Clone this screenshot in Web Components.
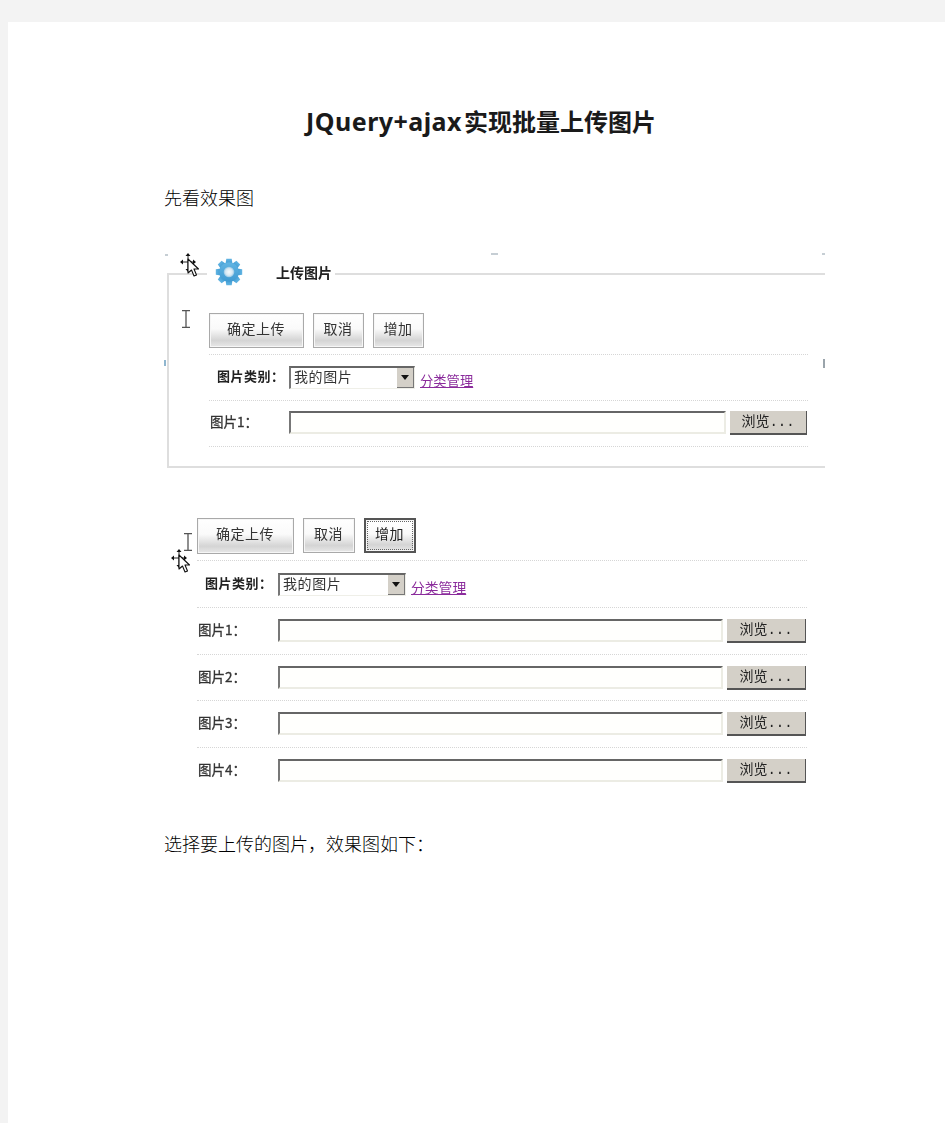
<!DOCTYPE html>
<html lang="zh-CN">
<head>
<meta charset="utf-8">
<title>JQuery+ajax实现批量上传图片</title>
<style>
  html, body { margin: 0; background: #f3f3f3; }
  body { padding: 22px 0 0 8px; font-family: "Noto Sans CJK TC", sans-serif; color: #111; }
</style>
</head>
<body>
<doc-page>
  <doc-title latin="JQuery+ajax">实现批量上传图片</doc-title>
  <doc-para style="margin-top:44px">先看效果图</doc-para>

  <shot-panel style="margin-top:39px">
    <form-row kind="bar"><push-button>确定上传</push-button><push-button small>取消</push-button><push-button small>增加</push-button></form-row>
    <form-row kind="select" label="图片类别：" w="80"></form-row>
    <form-row kind="file" label="图片1：" w="80"></form-row>
  </shot-panel>

  <shot-plain style="margin-top:48px">
    <form-row kind="bar2"><push-button wide>确定上传</push-button><push-button small>取消</push-button><push-button small focused>增加</push-button></form-row>
    <form-row kind="select2" label="图片类别：" w="81"></form-row>
    <form-row kind="file2" label="图片1：" w="81"></form-row>
    <form-row kind="file2" label="图片2：" w="81"></form-row>
    <form-row kind="file2" label="图片3：" w="81"></form-row>
    <form-row kind="file2" label="图片4：" w="81" last></form-row>
  </shot-plain>

  <doc-para style="margin-top:35px">选择要上传的图片，效果图如下：</doc-para>
</doc-page>

<script>
const MOVE_CURSOR = `
  <svg width="26" height="28" viewBox="0 0 26 28" style="display:block">
    <path d="M8 1v17M1 9h14" stroke="#222" stroke-width="1" fill="none"/>
    <path d="M8 0l-2.500 3h5zM8 19l-2.500-3h5zM0 9l3-2.500v5zM16 9l-3-2.500v5z" fill="#111"/>
    <path d="M8 6v14l3.500-3 2.500 6 2.500-1-2.500-6h4.500z" fill="#fff" stroke="#111" stroke-width="1.100" stroke-linejoin="round"/>
  </svg>`

const I_BEAM = `
  <svg width="10" height="18" viewBox="0 0 10 18" style="display:block">
    <path d="M1 .7h8M1 17.300h8M5 1v16" stroke="#555" stroke-width="1.300" fill="none"/>
  </svg>`

function gearSvg() {
  let teeth = ''
  for (let i = 0; i < 8; i++) {
    teeth += `<path d="M10.500 6 11.300 .8h5.400l.8 5.200z" transform="rotate(${i * 45} 14 14)"/>`
  }
  return `
  <svg width="28" height="28" viewBox="0 0 28 28" style="display:block">
    <defs>
      <radialGradient id="hole"><stop offset="0" stop-color="#f6fafc"/><stop offset=".65" stop-color="#d6e8f3"/><stop offset="1" stop-color="#8fc4e4"/></radialGradient>
      <linearGradient id="body" x2="0" y2="1"><stop offset="0" stop-color="#62b5e3"/><stop offset="1" stop-color="#3f9ad2"/></linearGradient>
    </defs>
    <g fill="url(#body)">${teeth}<circle cx="14" cy="14" r="9.800"/></g>
    <circle cx="14" cy="14" r="5.300" fill="url(#hole)"/>
  </svg>`
}

class DocPage extends HTMLElement {
  constructor() {
    super()
    this.attachShadow({ mode: 'open' }).innerHTML = `
      <style>
        :host { display: block; background: #fff; min-height: 1101px; padding: 81px 120px 0 156px; box-sizing: border-box; }
      </style>
      <slot></slot>`
  }
}

class DocTitle extends HTMLElement {
  constructor() {
    super()
    const latin = this.getAttribute('latin')
    this.attachShadow({ mode: 'open' }).innerHTML = `
      <style>
        :host { display: block; height: 36px; box-sizing: border-box; padding: 1px 27px 0 0; text-align: center; font: 700 24px/36px "Noto Sans", "Noto Sans CJK TC", sans-serif; color: #1a1a1a; }
        span { font-size: 25px; line-height: 0; letter-spacing: .45px; margin-right: 2px; }
      </style>
      <span>${latin}</span><slot></slot>`
  }
}

class DocPara extends HTMLElement {
  constructor() {
    super()
    this.attachShadow({ mode: 'open' }).innerHTML = `
      <style>
        :host { display: block; font: 300 18px/28px "Noto Sans CJK TC", sans-serif; color: #000; }
      </style>
      <slot></slot>`
  }
}

// first shot: a fieldset box with the gear legend, and selection handles around it
class ShotPanel extends HTMLElement {
  constructor() {
    super()
    this.attachShadow({ mode: 'open' }).innerHTML = `
      <style>
        :host { display: block; position: relative; padding-top: 23px; height: 220px; box-sizing: border-box; --small-w: 51px; }
        .box { margin-left: 3px; height: 195px; box-sizing: border-box; padding: 38px 17px 0 40px; border: 2px solid #dedede; border-right: 0; filter: blur(.6px); }
        .legend { position: absolute; left: 43px; top: 8px; width: 128px; height: 28px; display: flex; align-items: center; gap: 33px; padding-left: 8px; box-sizing: border-box; background: #fff; font: 700 14px "Noto Sans CJK TC", sans-serif; color: #222; filter: blur(.5px); }
        .move { position: absolute; left: 16px; top: 3px; }
        .beam { position: absolute; left: 17px; top: 60px; }
        .tick { position: absolute; background: #c6ced4; }
      </style>
      <div class="box"><slot></slot></div>
      <div class="legend">${gearSvg()}<span>上传图片</span></div>
      <div class="move">${MOVE_CURSOR}</div>
      <div class="beam">${I_BEAM}</div>
      <i class="tick" style="left:1px;top:4px;width:3px;height:2px"></i>
      <i class="tick" style="left:327px;top:3px;width:7px;height:2px"></i>
      <i class="tick" style="left:658px;top:3px;width:3px;height:2px"></i>
      <i class="tick" style="left:0;top:110px;width:2px;height:6px;background:#8fb6cf"></i>
      <i class="tick" style="left:659px;top:109px;width:2px;height:9px;background:#9aa4ab"></i>`
  }
}

// second shot: same form without the box, cursors to the left of it
class ShotPlain extends HTMLElement {
  constructor() {
    super()
    this.attachShadow({ mode: 'open' }).innerHTML = `
      <style>
        :host { display: block; position: relative; padding: 0 18px 0 33px; height: 276px; --select-w: 128px; --link-size: 13.800px; --link-top: 4px; }
        .rows { filter: blur(.6px); }
        .move { position: absolute; left: 7px; top: 31px; }
        .beam { position: absolute; left: 19px; top: 15px; }
      </style>
      <div class="rows"><slot></slot></div>
      <div class="beam">${I_BEAM}</div>
      <div class="move">${MOVE_CURSOR}</div>`
  }
}

class PushButton extends HTMLElement {
  constructor() {
    super()
    this.attachShadow({ mode: 'open' }).innerHTML = `
      <style>
        :host { display: flex; align-items: center; justify-content: center; width: 95px; height: 35px; box-sizing: border-box; padding: 0 1px 6px 0; border: 1px solid #a9a9a9; box-shadow: inset 0 0 0 1px #f6f6f6; background: linear-gradient(#fff 0, #fafafa 45%, #d4d4d4 80%, #e8e8e8 100%); font: 400 14px "Noto Sans CJK TC", sans-serif; letter-spacing: .5px; color: #333; }
        :host([wide]) { width: 97px; height: 36px; }
        :host([small]) { width: var(--small-w, 52px); }
        :host([focused]) { border: 2px solid #555; outline: 1px dotted #666; outline-offset: -4px; color: #222; }
      </style>
      <slot></slot>`
  }
}

class FakeSelect extends HTMLElement {
  constructor() {
    super()
    this.attachShadow({ mode: 'open' }).innerHTML = `
      <style>
        :host { display: flex; width: var(--select-w, 126px); height: 23px; box-sizing: border-box; border: 1px solid #efefe8; border-top: 2px solid #666; border-left: 2px solid #777; background: #fff; font: 400 14px/17px "Noto Sans CJK TC", sans-serif; letter-spacing: .6px; color: #333; }
        span { flex: 1; padding-left: 3px; }
        b { width: 17px; background: #d4d0c8; border-right: 1px solid #777; border-bottom: 1px solid #777; box-sizing: border-box; display: flex; align-items: center; justify-content: center; }
        b::after { content: ""; border: 4px solid transparent; border-top: 5px solid #111; border-bottom: 0; }
      </style>
      <span>我的图片</span><b></b>`
  }
}

class FileBox extends HTMLElement {
  constructor() {
    super()
    this.attachShadow({ mode: 'open' }).innerHTML = `
      <style>
        :host { display: flex; gap: 4px; margin-right: 1px; }
        .input { flex: 1; height: 23px; box-sizing: border-box; background: #fffffd; border: 2px solid #ecece4; border-top-color: #666; border-left-color: #777; }
        .browse { height: 24px; box-sizing: border-box; padding-bottom: 4px; background: #d4d0c8; border-right: 1px solid #555; border-bottom: 2px solid #555; display: flex; align-items: center; justify-content: center; font: 400 14px "Liberation Mono", "Noto Sans CJK TC", monospace; color: #222; width: var(--browse-w, 77px); }
      </style>
      <div class="input"></div><div class="browse">浏览...</div>`
  }
}

const ROW_KINDS = {
  bar: 'height:42px;gap:9px',
  bar2: 'height:43px;gap:9px',
  select: 'height:46px;padding-top:11px',
  select2: 'height:47px;padding-top:12px',
  file: 'height:46px;padding-top:10px',
  file2: 'height:46.670px;padding-top:11px'
}

class FormRow extends HTMLElement {
  constructor() {
    super()
    this.attachShadow({ mode: 'open' })
  }

  connectedCallback() {
    const kind = this.getAttribute('kind')
    const label = this.getAttribute('label')
    const labelWidth = this.getAttribute('w')
    const isSelect = kind.startsWith('select')
    const isFile = kind.startsWith('file')
    const browseWidth = kind === 'file2' ? '79px' : '77px'

    let body = '<slot></slot>'
    if (isSelect) {
      body = `
        <label class="strong">${label}</label>
        <fake-select></fake-select>
        <a>分类管理</a>`
    } else if (isFile) {
      body = `
        <label>${label}</label>
        <file-box style="flex:1;--browse-w:${browseWidth}"></file-box>`
    }

    this.shadowRoot.innerHTML = `
      <style>
        :host { display: flex; align-items: flex-start; box-sizing: border-box; border-bottom: 1px dotted #d6d6d6; ${ROW_KINDS[kind]} }
        :host([last]) { border-bottom-color: transparent; }
        label { flex: 0 0 ${labelWidth}px; box-sizing: border-box; padding-left: 1px; font: 400 13.500px/20px "Noto Sans CJK TC", sans-serif; -webkit-text-stroke: .3px #333; color: #333; white-space: nowrap; }
        label.strong { font-weight: 700; font-size: 13px; letter-spacing: .5px; -webkit-text-stroke: 0; color: #222; padding-left: 8px; }
        a { margin: var(--link-top, 5px) 0 0 5px; font: 400 var(--link-size, 13.300px)/20px "Noto Sans CJK TC", sans-serif; color: #8b2c9c; text-decoration: underline; }
      </style>
      ${body}`
  }
}

window.customElements.define('doc-page', DocPage)
window.customElements.define('doc-title', DocTitle)
window.customElements.define('doc-para', DocPara)
window.customElements.define('shot-panel', ShotPanel)
window.customElements.define('shot-plain', ShotPlain)
window.customElements.define('push-button', PushButton)
window.customElements.define('fake-select', FakeSelect)
window.customElements.define('file-box', FileBox)
window.customElements.define('form-row', FormRow)
</script>
</body>
</html>
